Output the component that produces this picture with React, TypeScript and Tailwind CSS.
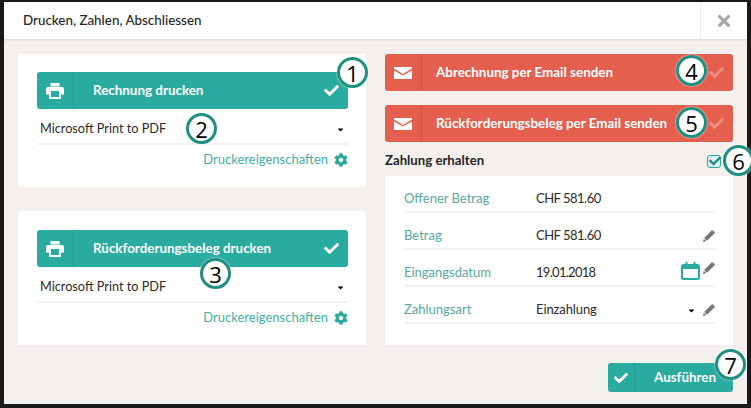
import { FaCheck, FaCog, FaTimes, FaCaretDown } from 'react-icons/fa';

const PrinterIcon = () => (
  <svg width="18" height="16" viewBox="0 0 18 16" fill="currentColor">
    <path d="M4.5 0h9v3.5h-9z" />
    <path fillRule="evenodd" d="M2 4h14a2 2 0 0 1 2 2v5.5h-3V16H3v-4.5H0V6a2 2 0 0 1 2-2zM5 8v6h8V8z" />
  </svg>
);

const MailIcon = () => (
  <svg width="18" height="12" viewBox="0 0 18 12" fill="currentColor">
    <path d="M0 0h18v1.6L9 7 0 1.6z" />
    <path d="M0 3.4l9 5.2 9-5.2V12H0z" />
  </svg>
);

const Pencil = () => (
  <svg width="12" height="12" viewBox="0 0 12 12" className="text-[#75777a]" fill="currentColor">
    <path d="M8.6.6a1 1 0 0 1 1.4 0l1.4 1.4a1 1 0 0 1 0 1.4L4 10.8 1.2 8z" />
    <path d="M.8 8.8l2.4 2.4-3.2.8z" />
  </svg>
);

const Callout = ({ n, className }: { n: number; className: string }) => (
  <span
    className={`absolute w-[31px] h-[31px] rounded-full bg-white border-[3px] border-[#1f8f80] flex items-center justify-center text-[22px] leading-none font-normal text-black font-['Open_Sans',sans-serif] shadow-[0_0_2px_rgba(255,255,255,0.9)] ${className}`}
  >
    {n}
  </span>
);

const ActionButton = ({
  icon,
  label,
  red,
  children,
}: {
  icon: React.ReactNode;
  label: string;
  red?: boolean;
  children?: React.ReactNode;
}) => (
  <div
    className={`relative h-[37px] rounded-[3px] flex items-center text-white font-bold text-[13.4px] ${
      red ? 'bg-[#e55f4f]' : 'bg-[#2aaba0]'
    }`}
  >
    <div
      className={`w-[37px] h-full flex items-center justify-center border-r shrink-0 ${
        red ? 'border-[#d4503f]' : 'border-[#239b90]'
      }`}
    >
      {icon}
    </div>
    <span className={`whitespace-nowrap ${red ? 'ml-[14px]' : 'ml-[19px]'}`}>{label}</span>
    <FaCheck className={`absolute right-[9px] top-[11px] w-[15px] h-[15px] ${red ? 'text-[#ee8f83]' : 'text-white'}`} />
    {children}
  </div>
);

const PrinterCard = ({
  label,
  className,
  children,
}: {
  label: string;
  className: string;
  children?: React.ReactNode;
}) => (
  <div className={`bg-white pl-[19px] pr-[18px] ${className}`}>
    <ActionButton icon={<PrinterIcon />} label={label}>
      {children}
    </ActionButton>
    <div className="h-[36px] pt-[6px] flex items-center justify-between px-[3px] border-b-2 border-[#f1f1f1] text-[12.7px] text-[#2b2b2b]">
      <span>Microsoft Print to PDF</span>
      <FaCaretDown className="w-[9px] h-[9px] text-black" />
    </div>
    <div className="mt-[5px] flex items-center justify-end gap-[6px] text-[13px] text-[#3fb0a5]">
      <span>Druckereigenschaften</span>
      <FaCog className="w-[14px] h-[14px] text-[#2aaba0]" />
    </div>
  </div>
);

const Row = ({
  label,
  value,
  valueClass,
  children,
}: {
  label: string;
  value: string;
  valueClass: string;
  children?: React.ReactNode;
}) => (
  <div className="h-[37px] flex">
    <div className="w-[130px] pt-[11px] flex items-center border-b-2 border-[#f3f3f3] text-[13px] text-[#56a8a2] shrink-0">
      {label}
    </div>
    <div className="flex-1 pt-[11px] flex items-center justify-between pl-[2px] border-b-2 border-[#f3f3f3] text-[13px] text-[#2b2b2b]">
      <span className={valueClass}>{value}</span>
      <div className="flex items-center">{children}</div>
    </div>
  </div>
);

export default function App() {
  return (
    <div className="w-[751px] h-[408px] bg-[#1a1a1a] pt-[2px] px-[4px] pb-[4px] font-['Lato',sans-serif] overflow-hidden">
      <div className="relative h-full bg-[#f3f0ed] flex flex-col">
        <header className="h-[37px] bg-white flex items-center justify-between shadow-[0_1px_2px_rgba(0,0,0,0.12)] shrink-0">
          <h1 className="ml-[19px] text-[13.4px] font-medium text-[#262626]">Drucken, Zahlen, Abschliessen</h1>
          <div className="w-[47px] h-full border-l border-[#ececec] flex items-center justify-center">
            <FaTimes className="w-[18px] h-[18px] text-[#a9a9a9]" />
          </div>
        </header>

        <div className="flex gap-[19px] px-[14px] pt-[15px]">
          <div className="w-[348px] flex flex-col gap-[24px]">
            <PrinterCard label="Rechnung drucken" className="h-[133px] pt-[18px]">
              <Callout n={1} className="right-[-20px] top-[-15px]" />
              <Callout n={2} className="left-[149px] top-[41px]" />
            </PrinterCard>
            <PrinterCard label="Rückforderungsbeleg drucken" className="h-[134px] pt-[19px]">
              <Callout n={3} className="left-[163px] top-[28px]" />
            </PrinterCard>
          </div>

          <div className="w-[348px] flex flex-col">
            <ActionButton red icon={<MailIcon />} label="Abrechnung per Email senden">
              <Callout n={4} className="right-[26px] top-[1px]" />
            </ActionButton>
            <div className="mt-[14px]">
              <ActionButton red icon={<MailIcon />} label="Rückforderungsbeleg per Email senden">
                <Callout n={5} className="right-[26px] top-[2px]" />
              </ActionButton>
            </div>
            <div className="relative h-[34px] pt-[4px] flex items-center justify-between text-[13.2px] font-bold text-[#262626]">
              <span>Zahlung erhalten</span>
              <span className="relative w-[14px] h-[13px] mr-[12px] rounded-[3px] border border-[#2aaba0] bg-[#dff2f0]">
                <FaCheck className="absolute left-[1px] top-[-1px] w-[12px] h-[12px] text-[#1f8f80]" />
              </span>
              <Callout n={6} className="right-[-21px] top-[3px]" />
            </div>
            <div className="bg-white h-[169px] pl-[19px] pr-[18px]">
              <Row label="Offener Betrag" value="CHF 581.60" valueClass="tracking-[-0.5px]" />
              <Row label="Betrag" value="CHF 581.60" valueClass="tracking-[-0.5px]">
                <Pencil />
              </Row>
              <Row label="Eingangsdatum" value="19.01.2018" valueClass="tracking-[-0.7px]">
                <svg width="19" height="18" viewBox="0 0 19 18" className="mr-[3px] mt-[-4px] text-[#2aaba0]">
                  <rect x="1" y="3" width="17" height="14" rx="1.5" fill="none" stroke="currentColor" strokeWidth="2" />
                  <rect x="1" y="3" width="17" height="4" fill="currentColor" />
                  <rect x="4.5" y="0" width="2" height="4" fill="currentColor" />
                  <rect x="12.5" y="0" width="2" height="4" fill="currentColor" />
                </svg>
                <span className="mb-[10px]">
                  <Pencil />
                </span>
              </Row>
              <Row label="Zahlungsart" value="Einzahlung" valueClass="tracking-[-0.1px]">
                <FaCaretDown className="w-[9px] h-[9px] mr-[7px] text-black" />
                <Pencil />
              </Row>
            </div>
            <div className="flex justify-end mt-[18px]">
              <div className="relative w-[125px] h-[29px] rounded-[3px] bg-[#2aaba0] text-white font-bold text-[13.4px] flex items-center">
                <div className="w-[27px] h-full flex items-center justify-center border-r border-[#239b90] shrink-0">
                  <FaCheck className="w-[14px] h-[14px]" />
                </div>
                <span className="ml-[19px]">Ausführen</span>
                <Callout n={7} className="right-[-13px] top-[-14px]" />
              </div>
            </div>
          </div>
        </div>
      </div>
    </div>
  );
}
